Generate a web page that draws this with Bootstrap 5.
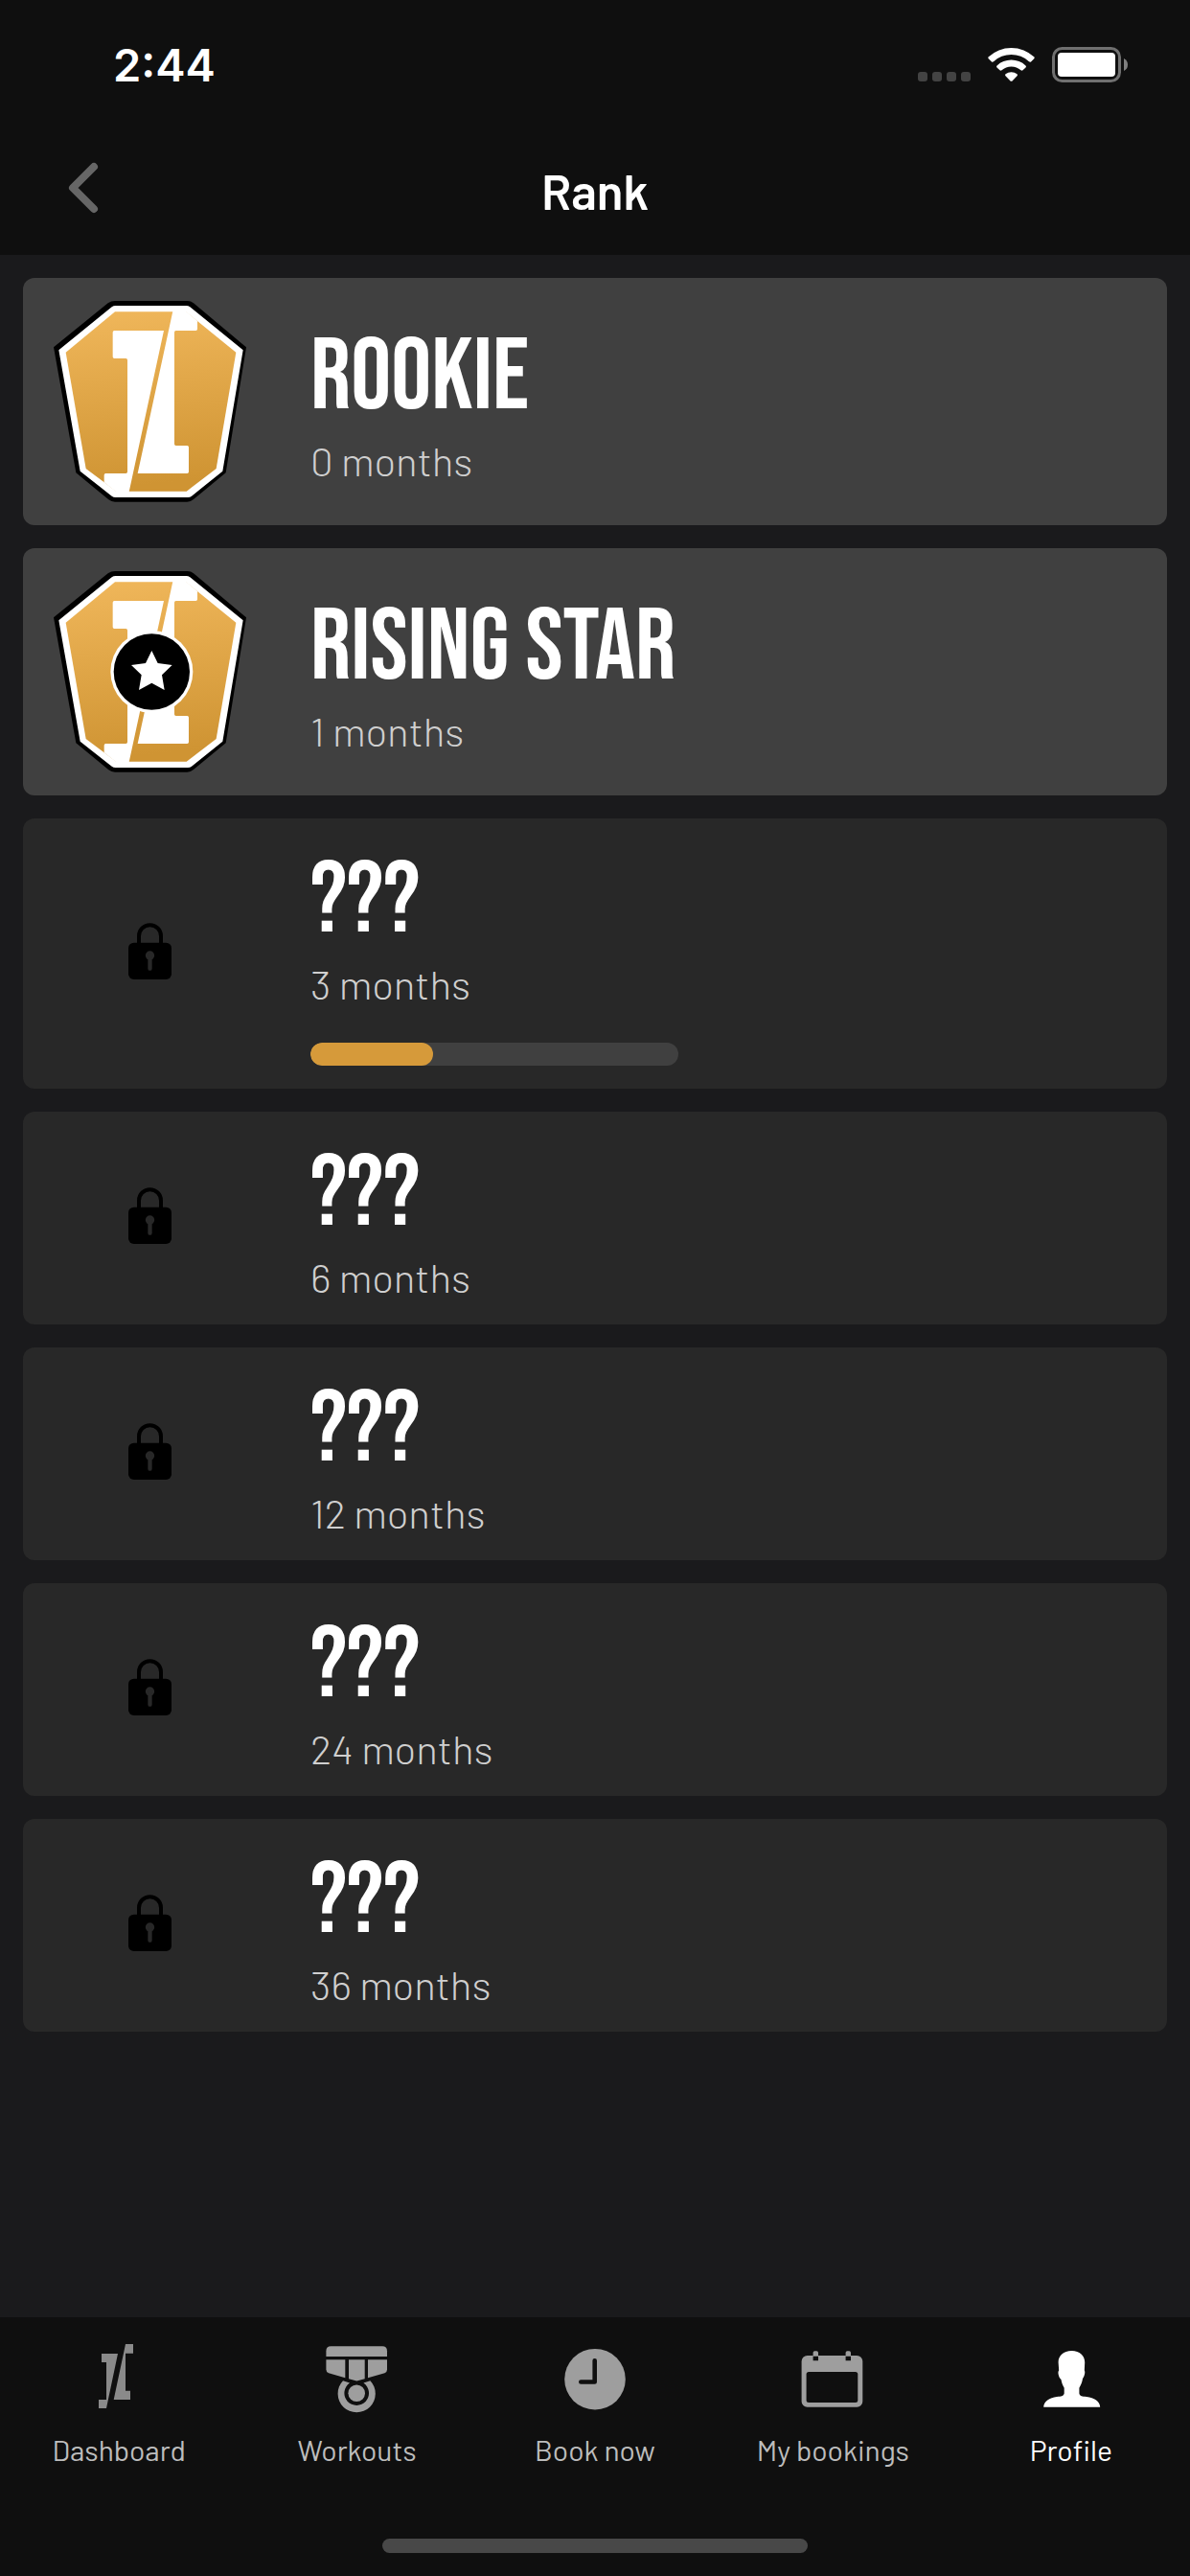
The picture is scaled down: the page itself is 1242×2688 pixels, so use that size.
<!DOCTYPE html>
<html lang="en">
<head>
    <meta charset="utf-8">
    <meta name="viewport" content="width=device-width, initial-scale=1">
    <title>Rank</title>
    <link href="https://cdn.jsdelivr.net/npm/bootstrap@5.3.0/dist/css/bootstrap.min.css" rel="stylesheet">
    <style>
        body {
            background: #1a1a1c;
            color: #fff;
            font-family: Barlow, Roboto, "Liberation Sans", sans-serif;
        }
        svg {
            display: block;
        }
        .top-area, .tab-area {
            background: #0f0f0f;
        }
        .status-bar {
            height: 132px;
            padding: 4px 62px 0 118px;
        }
        .clock-text {
            font-family: Inter, sans-serif;
            font-size: 47px;
            font-weight: 600;
            line-height: 48px;
        }
        .title-bar {
            height: 134px;
            padding: 0 60px;
        }
        .title-bar h1 {
            font-size: 51px;
            font-weight: 600;
            line-height: 60px;
        }
        .back-btn, .title-spacer {
            width: 60px;
        }
        .rank-list {
            padding: 24px;
            gap: 24px;
        }
        .rank-card {
            background: #282828;
            border-radius: 12px;
            padding: 24px 0;
        }
        .rank-card.unlocked {
            background: #404040;
        }
        .rank-icon {
            width: 264px;
            margin-right: 36px;
            flex-shrink: 0;
        }
        .rank-name {
            font-family: "Bebas Neue", "Liberation Sans Narrow", "Liberation Sans", sans-serif;
            font-size: 105px;
            font-weight: 400;
            line-height: 124px;
        }
        .rank-months {
            color: #cfcfcf;
            font-size: 42px;
            font-weight: 300;
            line-height: 48px;
            padding-bottom: 2px;
        }
        .rank-progress {
            width: 43%;
            height: 24px;
            margin-top: 36px;
            border-radius: 12px;
            background: #404040;
        }
        .rank-progress .progress-bar {
            border-radius: 12px;
            background: #d69a3a;
        }
        .tab-area {
            height: 270px;
            padding: 28px 0 24px;
        }
        .tab-link {
            color: #bdbdbd;
            font-size: 30px;
            line-height: 40px;
            gap: 18px;
            font-weight: 400;
        }
        .tab-link svg {
            color: #9e9e9e;
        }
        .tab-link.active, .tab-link.active svg {
            color: #fff;
        }
        .home-bar {
            width: 444px;
            height: 15px;
            background: #484848;
        }
    </style>
</head>
<body>
    <svg width="0" height="0" class="position-absolute" aria-hidden="true">
        <defs>
            <linearGradient id="gold" x1="0" y1="0" x2="0.1" y2="1">
                <stop offset="0" stop-color="#f0b75b"/>
                <stop offset="1" stop-color="#cf9433"/>
            </linearGradient>
            <symbol id="badge-base" viewBox="48 42 603 630">
                <path fill="#000" d="M240 42H467Q478 42 486 49L651 187L587 580L486 663Q477 671 466 671H240Q229 671 220 664L118 580L48 187L218 49Q228 42 240 42Z"/>
                <path fill="#fff" d="M242 57H463Q470 57 475 61L641 196L577 575L480 653Q475 657 468 657H242Q235 657 230 653L131 575L64 196L230 61Q235 57 242 57Z"/>
                <path fill="url(#gold)" d="M240 76H462L619 203L557 567L464 638H244L149 567L86 203Z"/>
                <path fill="#fff" d="M238 135H393L284 640H244L206 610V587Q206 582 211 582H274Q279 582 279 577V227Q279 222 274 222H238Q233 222 233 217V140Q233 135 238 135Z"/>
                <path fill="#fff" d="M421 74L311 582H466Q471 582 471 577V500Q471 495 466 495H431Q426 495 426 490V140Q426 135 431 135H493Q498 135 498 130V105L462 74Z"/>
            </symbol>
            <symbol id="badge-star" viewBox="48 42 603 630">
                <use href="#badge-base" x="48" y="42" width="603" height="630"/>
                <circle cx="355" cy="357" r="129" fill="#fff"/>
                <circle cx="355" cy="357" r="119" fill="#000"/>
                <path fill="#fff" d="M355 291L374 330L419 336L387 367L395 414L355 392L315 414L323 367L291 336L336 330Z"/>
            </symbol>
            <symbol id="lock" viewBox="0 0 135 192">
                <path fill="none" stroke="#000" stroke-width="12" d="M33 66V41a34.500 34.500 0 0 1 69 0V66"/>
                <rect y="62" width="135" height="115" rx="17" fill="#000"/>
                <circle cx="67.500" cy="102" r="14" fill="#282828"/>
                <path stroke="#282828" stroke-width="13" stroke-linecap="round" d="M67.500 102V143"/>
            </symbol>
        </defs>
    </svg>

    <div class="d-flex flex-column min-vh-100">
        <header class="top-area">
            <div class="status-bar d-flex align-items-center justify-content-between">
                <span class="clock-text">2:44</span>
                <!-- signal, wifi, battery -->
                <svg width="222" height="40" viewBox="958 48 222 40" aria-hidden="true">
                    <g fill="#434343">
                        <rect x="958" y="75" width="10" height="10" rx="3"/>
                        <rect x="973" y="75" width="10" height="10" rx="3"/>
                        <rect x="988" y="75" width="10" height="10" rx="3"/>
                        <rect x="1003" y="75" width="10" height="10" rx="3"/>
                    </g>
                    <g fill="#fff">
                        <path d="M1031.500 59.500A35 35 0 0 1 1079.500 59.500Q1080 60.500 1079 61.500L1076 64.500Q1075 65 1074 64.300A27 27 0 0 0 1037 64.300Q1036 65 1035 64.500L1032 61.500Q1031 60.500 1031.500 59.500Z"/>
                        <path d="M1040.500 68.500A22 22 0 0 1 1070.500 68.500Q1071.500 69.500 1070.500 70.500L1067.500 73.300Q1066.500 74 1065.500 73.300A15 15 0 0 0 1045.500 73.300Q1044.500 74 1043.500 73.300L1040.500 70.500Q1039.500 69.500 1040.500 68.500Z"/>
                        <path d="M1049.500 77.300A9.500 9.500 0 0 1 1061.500 77.300Q1062.500 78.300 1061.500 79.300L1056.500 84.400Q1055.500 85.300 1054.500 84.400L1049.500 79.300Q1048.500 78.300 1049.500 77.300Z"/>
                        <rect x="1104" y="55" width="60" height="25" rx="4"/>
                    </g>
                    <rect x="1099.500" y="50.500" width="69" height="34" rx="9" fill="none" stroke="#707070" stroke-width="3"/>
                    <path fill="#808080" d="M1173 61Q1177 63 1177 67.500Q1177 72 1173 74Z"/>
                </svg>
            </div>
            <div class="title-bar d-flex align-items-center justify-content-between">
                <button type="button" class="back-btn btn p-0 border-0" aria-label="Back">
                    <svg width="60" height="60" viewBox="0 0 60 60" fill="none" stroke="#666" stroke-width="8" stroke-linecap="round" stroke-linejoin="round">
                        <path d="M38 5L16 27L38 49"/>
                    </svg>
                </button>
                <h1 class="m-0">Rank</h1>
                <span class="title-spacer"></span>
            </div>
        </header>

        <main class="flex-grow-1">
            <ul class="rank-list list-unstyled d-flex flex-column m-0" id="rankList"></ul>
        </main>

        <nav class="tab-area d-flex flex-column">
            <div class="row g-0">
                <div class="col">
                    <a href="#dashboard" class="tab-link d-flex flex-column align-items-center text-decoration-none">
                        <svg width="72" height="72" viewBox="0 0 72 72" fill="#8a8a8a" aria-hidden="true">
                            <path d="M18 10H35L23 67H15V58H23V19H18Z"/>
                            <path d="M43 0H51V9.700H43V48.700H48V58H30.700Z"/>
                        </svg>
                        Dashboard
                    </a>
                </div>
                <div class="col">
                    <a href="#workouts" class="tab-link d-flex flex-column align-items-center text-decoration-none">
                        <svg width="72" height="72" viewBox="0 0 72 72" fill="currentColor" aria-hidden="true">
                            <path d="M3.400 13V7.300Q3.400 2.300 8.400 2.300H62Q67 2.300 67 7.300V13Z"/>
                            <path d="M3.400 16.300H23.300V35.300L6 30.300Q3.400 29.300 3.400 26.500Z"/>
                            <path d="M27 16.300H43.700V36.300L35.300 38.600L27 36.300Z"/>
                            <path d="M47 16.300H67V26.500Q67 29.300 64.500 30.300L47 35.300Z"/>
                            <circle cx="35.200" cy="51.300" r="8.800"/>
                            <path d="M21 38.200A19.600 19.600 0 1 0 49.400 38.200L42.400 40.600A12.800 12.800 0 1 1 28 40.600Z"/>
                        </svg>
                        Workouts
                    </a>
                </div>
                <div class="col">
                    <a href="#book" class="tab-link d-flex flex-column align-items-center text-decoration-none">
                        <svg width="72" height="72" viewBox="0 0 72 72" fill="currentColor" aria-hidden="true">
                            <circle cx="36" cy="36.700" r="31.800"/>
                            <path fill="none" stroke="#0f0f0f" stroke-width="4.600" stroke-linecap="round" stroke-linejoin="round" d="M35.700 17.300V39.500H21.300"/>
                        </svg>
                        Book now
                    </a>
                </div>
                <div class="col">
                    <a href="#bookings" class="tab-link d-flex flex-column align-items-center text-decoration-none">
                        <svg width="72" height="72" viewBox="0 0 72 72" fill="currentColor" aria-hidden="true">
                            <rect x="3.600" y="12" width="63.700" height="53.700" rx="6"/>
                            <rect x="8.600" y="29" width="53.700" height="32" rx="2.500" fill="#0f0f0f"/>
                            <path fill="#0f0f0f" d="M15.600 12.600H21V17.300H15.600ZM49.600 12.600H55V17.300H49.600Z"/>
                            <path d="M15.600 12.600V9Q15.600 7.300 17.300 7.300H19.300Q21 7.300 21 9V12.600ZM49.600 12.600V9Q49.600 7.300 51.300 7.300H53.300Q55 7.300 55 9V12.600Z"/>
                        </svg>
                        My bookings
                    </a>
                </div>
                <div class="col">
                    <a href="#profile" class="tab-link active d-flex flex-column align-items-center text-decoration-none" aria-current="page">
                        <svg width="72" height="72" viewBox="0 0 72 72" fill="currentColor" aria-hidden="true">
                            <path d="M36.500 7C45 7 50.200 12 50.200 19L49.800 27.500C51 29 49.800 34 48 36C47.500 40 46 43 44.400 45.700V51.500C45 54.500 47.500 54.500 52 55C60 56 66.200 60 66.200 65.800H7.200C7.200 60 13.500 56 21 55C25.500 54.500 28 54.500 28.700 51.500V45.700C27 43 26 40 25.500 37C23 35 21.500 29 23.200 27.500L22.600 19C22.600 12 28 7 36.500 7Z"/>
                        </svg>
                        Profile
                    </a>
                </div>
            </div>
            <div class="home-bar rounded-pill mx-auto mt-auto"></div>
        </nav>
    </div>

    <script src="https://cdn.jsdelivr.net/npm/bootstrap@5.3.0/dist/js/bootstrap.bundle.min.js"></script>
    <script>
        const ranks = [
            { name: 'ROOKIE', months: 0, badge: 'badge-base' },
            { name: 'RISING STAR', months: 1, badge: 'badge-star' },
            { name: '???', months: 3, done: 1 },
            { name: '???', months: 6 },
            { name: '???', months: 12 },
            { name: '???', months: 24 },
            { name: '???', months: 36 }
        ];

        function renderRanks() {
            let html = '';

            ranks.forEach(rank => {
                // Locked ranks have no badge yet
                const icon = rank.badge
                    ? `<svg width="201" height="210" aria-hidden="true"><use href="#${rank.badge}"/></svg>`
                    : `<svg width="45" height="64" role="img" aria-label="Locked"><use href="#lock"/></svg>`;
                const percent = rank.done ? rank.done / rank.months * 100 : 0;

                html += `
                    <li class="rank-card d-flex align-items-center ${rank.badge ? 'unlocked' : ''}">
                        <div class="rank-icon d-flex justify-content-center">${icon}</div>
                        <div class="flex-grow-1">
                            <h2 class="rank-name m-0">${rank.name}</h2>
                            <p class="rank-months mb-0">${rank.months} months</p>
                            ${rank.done ? `
                            <div class="progress rank-progress" role="progressbar" aria-label="Progress to next rank" aria-valuenow="${rank.done}" aria-valuemin="0" aria-valuemax="${rank.months}">
                                <div class="progress-bar" style="width: ${percent}%"></div>
                            </div>` : ''}
                        </div>
                    </li>
                `;
            });

            document.getElementById('rankList').innerHTML = html;
        }

        document.addEventListener('DOMContentLoaded', renderRanks);
    </script>
</body>
</html>
